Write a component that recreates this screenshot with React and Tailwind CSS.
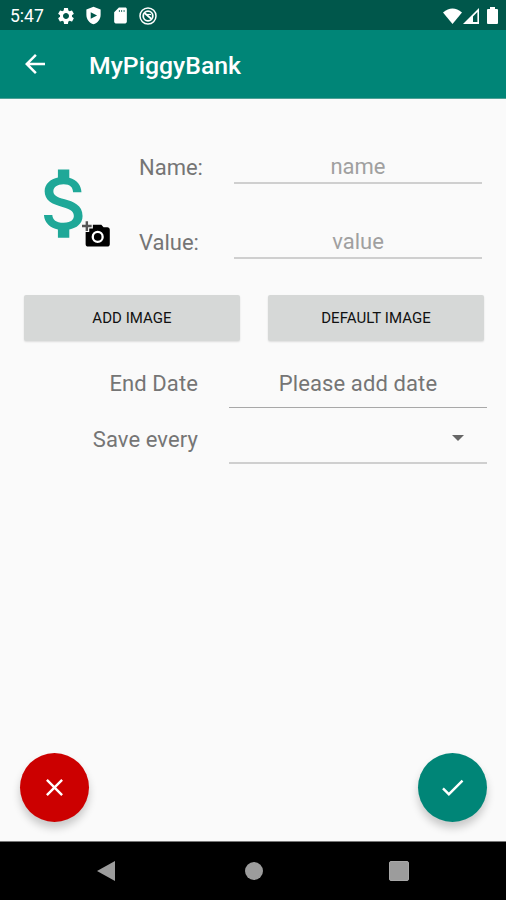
const font = 'font-[Roboto,"Liberation_Sans",sans-serif]';

function Glyph({ d, className, viewBox = '0 0 24 24' }) {
  return (
    <svg viewBox={viewBox} className={`shrink-0 ${className}`} fill="currentColor">
      <path fillRule="evenodd" d={d} />
    </svg>
  );
}

const GEAR =
  'M19.14 12.94c.04-.3.06-.61.06-.94 0-.32-.02-.64-.07-.94l2.03-1.58a.49.49 0 0 0 .12-.61l-1.92-3.32a.488.488 0 0 0-.59-.22l-2.39.96c-.5-.38-1.03-.7-1.62-.94l-.36-2.54a.484.484 0 0 0-.48-.41h-3.84c-.24 0-.43.17-.47.41l-.36 2.54c-.59.24-1.13.57-1.62.94l-2.39-.96c-.22-.08-.47 0-.59.22L2.74 8.87c-.12.21-.08.47.12.61l2.03 1.58c-.05.3-.09.63-.09.94s.02.64.07.94l-2.03 1.58a.49.49 0 0 0-.12.61l1.92 3.32c.12.22.37.29.59.22l2.39-.96c.5.38 1.03.7 1.62.94l.36 2.54c.05.24.24.41.48.41h3.84c.24 0 .44-.17.47-.41l.36-2.54c.59-.24 1.13-.56 1.62-.94l2.39.96c.22.08.47 0 .59-.22l1.92-3.32c.12-.22.07-.47-.12-.61l-2.01-1.58zM12 15.6c-1.98 0-3.6-1.62-3.6-3.6s1.62-3.6 3.6-3.6 3.6 1.62 3.6 3.6-1.62 3.6-3.6 3.6z';
const SHIELD = 'M12 1L3 4.5V11c0 5.55 3.84 10.74 9 12 5.16-1.26 9-6.45 9-12V4.5L12 1zM8.5 8L16.500 12l-8 4z';
const SD = 'M18 2h-8L4 8v12c0 1.1.9 2 2 2h12c1.1 0 2-.9 2-2V4c0-1.1-.9-2-2-2zM10 5h1v2.500h-1zM13 5h1v2.500h-1zM16 5h1v2.500h-1z';
const DOLLAR =
  'M11.8 10.9c-2.27-.59-3-1.2-3-2.15 0-1.09 1.01-1.85 2.7-1.85 1.78 0 2.44.85 2.5 2.1h2.21c-.07-1.72-1.12-3.3-3.21-3.81V3h-3v2.16c-1.94.42-3.5 1.68-3.5 3.61 0 2.31 1.91 3.46 4.7 4.13 2.5.6 3 1.48 3 2.41 0 .69-.49 1.79-2.7 1.79-2.06 0-2.87-.92-2.98-2.1h-2.2c.12 2.19 1.76 3.42 3.68 3.83V21h3v-2.15c1.95-.37 3.5-1.5 3.5-3.55 0-2.84-2.43-3.81-4.7-4.4z';
const BACK = 'M20 11H7.83l5.59-5.59L12 4l-8 8 8 8 1.41-1.41L7.83 13H20v-2z';
const CLOSE = 'M19 6.41L17.59 5 12 10.59 6.41 5 5 6.41 10.59 12 5 17.59 6.41 19 12 13.41 17.59 19 19 17.59 13.41 12z';
const CHECK = 'M9 16.17L4.83 12l-1.42 1.41L9 19 21 7l-1.41-1.41z';

function StatusBar() {
  return (
    <div className="flex h-[30px] items-center bg-[#00574b] pt-[1px] pl-[10px] pr-[8px] text-white">
      <span className="w-[46px] pt-[1px] text-[17.5px] leading-5">5:47</span>
      <Glyph d={GEAR} className="size-[20px]" />
      <Glyph d={SHIELD} className="ml-[8px] size-[19px]" />
      <Glyph d={SD} className="ml-[8px] size-[19px]" />
      <svg viewBox="0 0 18 18" className="ml-[9px] size-[18px] shrink-0" fill="none" stroke="currentColor">
        <circle cx="9" cy="9" r="8" strokeWidth="1.500" />
        <circle cx="9" cy="9" r="4.800" strokeWidth="1.800" />
        <path d="M5.500 6l7 6" strokeWidth="1.800" />
        <path d="M8 7.500l4 0" strokeWidth="1.200" />
      </svg>
      <div className="ml-auto flex items-center">
        <svg viewBox="0 0 19 16" className="h-[16px] w-[19px]" fill="currentColor">
          <path d="M0 4.500Q9.500-3.500 19 4.500L9.500 16z" />
        </svg>
        <svg viewBox="0 0 16 16" className="ml-[1px] h-[16px] w-[16px]" fill="currentColor">
          <path fillRule="evenodd" d="M16 0v16H0zM14.400 4L10 8.500v5.500h4.400z" />
        </svg>
        <svg viewBox="0 0 11 17" className="ml-[8px] h-[17px] w-[11px]" fill="currentColor">
          <path d="M3 0h5v2h2q1 0 1 1v13q0 1-1 1H1q-1 0-1-1V3q0-1 1-1h2z" />
        </svg>
      </div>
    </div>
  );
}

function Field({ label, hint }) {
  return (
    <div className="flex h-[75px] items-start">
      <label className="w-[95px] pt-[13px] text-[22px] leading-[26px] text-[#757575]">{label}</label>
      <div className="h-[42px] w-[248px] border-b-2 border-[#cfcfcf] pt-[12px] text-center text-[22px] leading-[26px] text-[#a0a0a0]">
        {hint}
      </div>
    </div>
  );
}

function GreyButton({ children }) {
  return (
    <button className="h-[46px] w-[216px] rounded-[2px] bg-[#d6d8d7] text-[15px] leading-5 tracking-[0.05px] text-[#111] shadow-[0_1px_2px_rgba(0,0,0,0.12)]">
      {children}
    </button>
  );
}

function Fab({ d, className, icon }) {
  return (
    <button
      className={`flex size-[69px] items-center justify-center rounded-full text-white shadow-[0_6px_9px_rgba(0,0,0,0.2)] ${className}`}
    >
      <Glyph d={d} className={icon} />
    </button>
  );
}

export default function App() {
  return (
    <div className={`flex h-[900px] w-[506px] flex-col overflow-hidden bg-[#fafafa] ${font}`}>
      <StatusBar />
      <header className="flex h-[69px] items-center border-b border-[#4fa096] bg-[#008577] pl-[20px] text-white">
        <Glyph d={BACK} className="size-[30px]" />
        <h1 className="ml-[39px] pt-[3px] text-[24.8px] leading-8 font-medium">MyPiggyBank</h1>
      </header>

      <main className="flex flex-1 flex-col">
        <section className="flex pt-[43px] pl-[18px]">
          <div className="relative h-[106px] w-[121px] pt-[16px] pl-[2px]">
            <Glyph d={DOLLAR} className="size-[91px] text-[#1fa898]" />
            <svg viewBox="0 0 24 24" className="absolute top-[78px] left-[64px] size-[29px]">
              <path fill="#555" d="M3 4V1h2v3h3v2H5v3H3V6H0V4z" />
              <path
                fill="#000"
                d="M6 10V7h3V4h7l1.830 2H21c1.100 0 2 .9 2 2v12c0 1.100-.9 2-2 2H5c-1.100 0-2-.9-2-2V10h3z"
              />
              <circle cx="13" cy="14" r="4.100" fill="none" stroke="#fff" strokeWidth="1.900" />
            </svg>
          </div>
          <div>
            <Field label="Name:" hint="name" />
            <Field label="Value:" hint="value" />
          </div>
        </section>

        <div className="mt-[3px] flex justify-between pr-[22px] pl-[24px]">
          <GreyButton>ADD IMAGE</GreyButton>
          <GreyButton>DEFAULT IMAGE</GreyButton>
        </div>

        <section className="grid grid-cols-[198px_258px] gap-x-[31px] pt-[18px] text-[22px] leading-[26px] tracking-[0.1px] text-[#757575]">
          <div className="h-[56px] pt-[12px] text-right">End Date</div>
          <div className="h-[49px] border-b border-[#a8a8a8] pt-[12px] text-center">Please add date</div>
          <div className="h-[56px] pt-[12px] text-right">Save every</div>
          <div className="flex h-[49px] justify-end border-b-2 border-[#cfcfcf] pt-[19px] pr-[23px]">
            <svg viewBox="0 0 12 6" className="mt-[1px] h-[6px] w-[12px]" fill="#666">
              <path d="M0 0h12L6 6z" />
            </svg>
          </div>
        </section>

        <div className="mt-auto flex justify-between pr-[19px] pb-[19px] pl-[20px]">
          <Fab d={CLOSE} className="bg-[#cc0000]" icon="size-[29px]" />
          <Fab d={CHECK} className="bg-[#008577]" icon="size-[29px]" />
        </div>
      </main>

      <nav className="flex h-[59px] items-center justify-between border-t border-[#777] bg-black pr-[97px] pl-[96px] text-[#9c9c9c]">
        <svg viewBox="0 0 19 22" className="h-[22px] w-[19px]" fill="currentColor">
          <path d="M19 1v20L1 11z" />
        </svg>
        <span className="ml-[3px] size-[18px] rounded-full bg-[#9c9c9c]" />
        <span className="size-[20px] rounded-[2px] border border-[#a8a8a8] bg-[#9c9c9c]" />
      </nav>
    </div>
  );
}
